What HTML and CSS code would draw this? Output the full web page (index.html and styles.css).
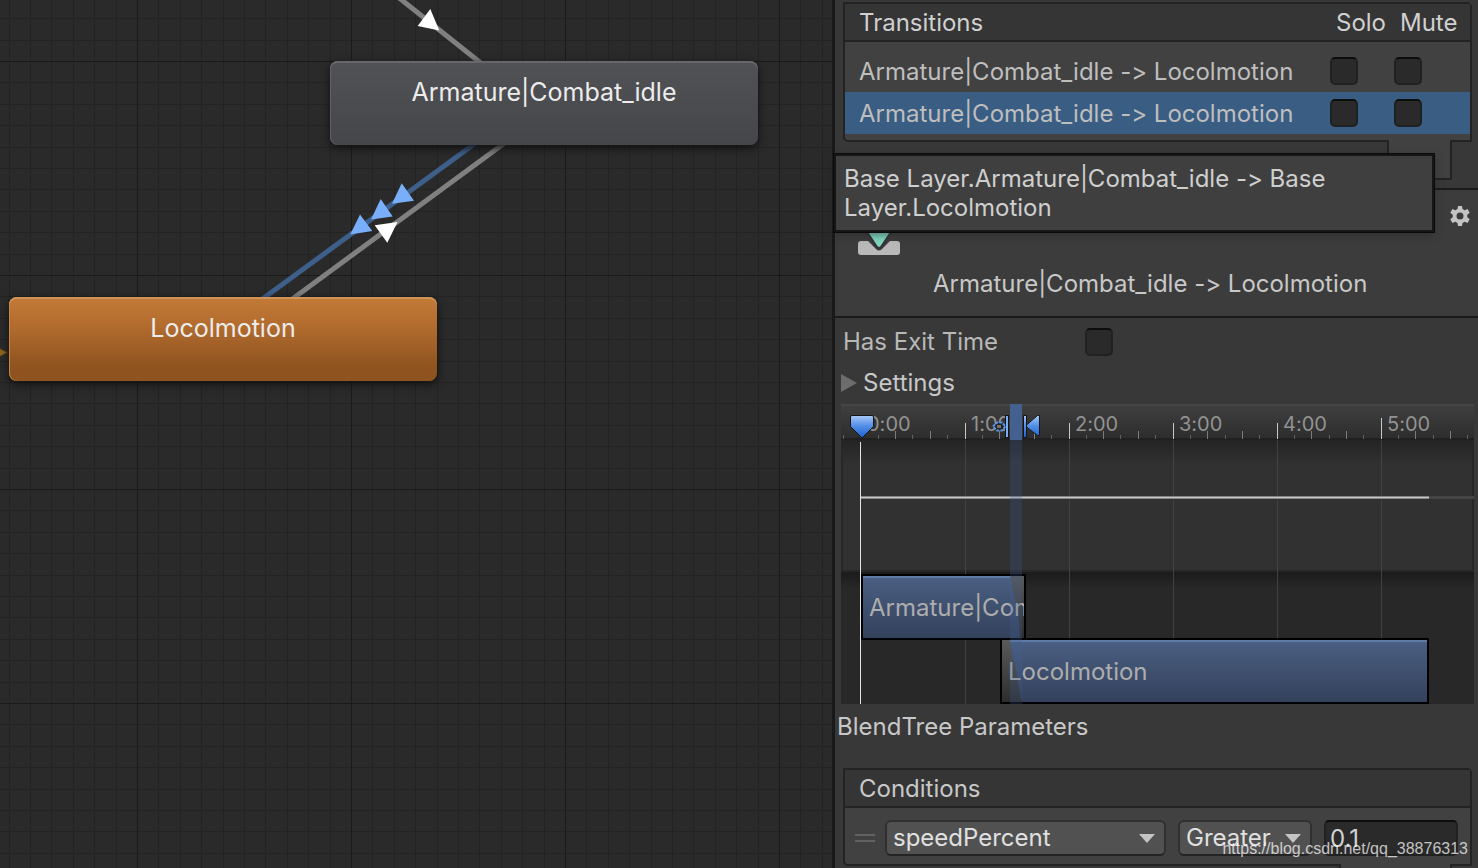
FILE: index.html
```
<!DOCTYPE html>
<html lang="en">
<head>
<meta charset="utf-8">
<title>Animator</title>
<link rel="stylesheet" href="styles.css">
</head>
<body>
<div class="editor">
  <main class="graph">
    <svg class="graph-art" aria-hidden="true">
      <defs>
        <pattern id="grid" x="137" y="61" width="214" height="214" patternUnits="userSpaceOnUse">
          <path class="grid-minor" d="M21.5 0V214M43.5 0V214M64.5 0V214M86.5 0V214M107.5 0V214M128.5 0V214M150.5 0V214M171.5 0V214M193.5 0V214M0 21.5H214M0 43.5H214M0 64.5H214M0 86.5H214M0 107.5H214M0 128.5H214M0 150.5H214M0 171.5H214M0 193.5H214"/>
          <path class="grid-major" d="M.5 0V214M0 .5H214"/>
        </pattern>
      </defs>
      <rect width="100%" height="100%" fill="url(#grid)"/>
      <path class="edge" d="M398 -3L482 64M506 142L291 300"/>
      <path class="edge edge-selected" d="M477 142L261 300"/>
      <path class="arrow" d="M430.3 9L417.7 26L439.3 30.5ZM374.7 225.3L397.5 222L387.3 242.7Z"/>
      <path class="arrow-selected" d="M401.7 183.2L414 200.8L392 203.8ZM380.7 199L392.7 216.5L371 219.5ZM360 214.5L372.3 231L350.3 234.5Z"/>
      <path class="arrow-entry" d="M-2 347.500L8 352.500L-2 357.500Z"/>
    </svg>
    <div class="node node-idle">Armature|Combat_idle</div>
    <div class="node node-default">Locolmotion</div>
  </main>

  <aside class="inspector">
    <div class="list">
      <table class="transitions">
        <thead>
          <tr><th>Transitions</th><th class="col-solo">Solo</th><th class="col-mute">Mute</th></tr>
        </thead>
        <tbody>
          <tr>
            <td>Armature|Combat_idle -&gt; Locolmotion</td>
            <td><input class="check" type="checkbox" aria-label="Solo transition 1"></td>
            <td><input class="check" type="checkbox" aria-label="Mute transition 1"></td>
          </tr>
          <tr class="selected">
            <td>Armature|Combat_idle -&gt; Locolmotion</td>
            <td><input class="check" type="checkbox" aria-label="Solo transition 2"></td>
            <td><input class="check" type="checkbox" aria-label="Mute transition 2"></td>
          </tr>
        </tbody>
      </table>
    </div>
    <div class="list-tab"></div>

    <header class="object-header">
      <svg class="transition-icon" width="42" height="42" viewBox="0 0 42 42" aria-hidden="true">
        <path fill="#b9b9b9" d="M3 28H10L18 36Q21 39 24 36L32 28H39Q42 28 42 31V39Q42 42 39 42H3Q0 42 0 39V31Q0 28 3 28Z"/>
        <path fill="#7fd6c1" stroke="#343434" stroke-width="2" d="M17 0H25V19H33L23 34Q21 36 19 34L9 19H17Z"/>
      </svg>
      <h1 class="object-title">Armature|Combat_idle -&gt; Locolmotion</h1>
      <button class="gear" aria-label="Options">
        <svg width="20" height="20" viewBox="0 0 20 20" aria-hidden="true">
          <path fill="#c4c4c4" fill-rule="evenodd" d="M8 0H12L12.5 3L14.7 4.2L17.6 3.1L19.7 6.7L17.3 8.7V11.3L19.7 13.3L17.6 16.9L14.7 15.8L12.5 17L12 20H8L7.5 17L5.3 15.8L2.4 16.9L.3 13.3L2.7 11.3V8.7L.3 6.7L2.4 3.1L5.3 4.2L7.5 3ZM10 6.500A3.500 3.500 0 1 0 10 13.500A3.500 3.500 0 1 0 10 6.500Z"/>
        </svg>
      </button>
    </header>

    <div class="property">
      <label for="exit">Has Exit Time</label>
      <input class="check" id="exit" type="checkbox">
    </div>
    <button class="foldout">
      <svg width="16" height="18" viewBox="0 0 16 18" aria-hidden="true"><path fill="#6d6d6d" d="M0 0L16 9L0 18Z"/></svg>
      Settings
    </button>

    <section class="timeline" aria-label="Transition timeline">
      <div class="ruler"><span>0:00</span><span>1:00</span><span>2:00</span><span>3:00</span><span>4:00</span><span>5:00</span></div>
      <div class="curve"></div>
      <div class="tracks">
        <div class="clip clip-source">
          <svg class="clip-fade" width="14" height="62" viewBox="0 0 14 62" aria-hidden="true"><path d="M0 0H14V62H10L9 46Z" fill="url(#fade)"/></svg>
          <span>Armature|Com</span>
        </div>
        <div class="clip clip-target">
          <svg class="clip-fade" width="20" height="62" viewBox="0 0 20 62" aria-hidden="true"><path d="M0 0H8L12 20L20 62H0Z" fill="url(#fade)"/></svg>
          <span>Locolmotion</span>
        </div>
      </div>
      <svg class="timeline-art" aria-hidden="true">
        <defs>
          <linearGradient id="fade" x1="0" y1="0" x2="0" y2="1"><stop offset="0" stop-color="#5a5a5a"/><stop offset="1" stop-color="#2d2d2d"/></linearGradient>
          <linearGradient id="marker" x1="0" y1="0" x2="0" y2="1"><stop offset="0" stop-color="#a9c9f8"/><stop offset=".45" stop-color="#5590e8"/><stop offset="1" stop-color="#1c5fd0"/></linearGradient>
        </defs>
        <path class="tick-small" d="M2.5 31V35M37.5 31V35M71.5 31V35M106.5 31V35M141.5 31V35M175.5 31V35M210.5 31V35M245.5 31V35M279.5 31V35M314.5 31V35M349.5 31V35M384.5 31V35M418.5 31V35M453.5 31V35M488.5 31V35M522.5 31V35M557.5 31V35M592.5 31V35M626.5 31V35"/>
        <path class="tick-medium" d="M54.5 27V35M89.5 27V35M158.5 27V35M193.5 27V35M262.5 27V35M297.5 27V35M366.5 27V35M401.5 27V35M470.5 27V35M505.5 27V35M574.5 27V35M609.5 27V35"/>
        <path class="tick-large" d="M124.5 19V35M228.5 19V35M332.5 19V35M436.5 19V35M540.5 14V35"/>
        <path class="second-line" d="M124.5 36V170M124.5 236V300M228.5 36V234M332.5 36V234M436.5 36V234M540.5 36V234"/>
        <rect class="curve-rest" x="588" y="92" width="100%" height="3"/>
        <rect class="curve-line" x="20" y="92" width="568" height="3"/>
        <rect class="curve-core" x="20" y="93" width="568" height="1"/>
        <rect class="band" x="169" y="36" width="12" height="264"/>
        <rect class="band-top" x="169" y="0" width="12" height="36"/>
        <rect class="playhead" x="19" y="38" width="1" height="262"/>
        <path fill="url(#marker)" stroke="#151515" d="M9.5 13Q9.5 11.500 11 11.500H31Q32.5 11.500 32.5 13V22.500L21 34L9.500 22.500Z"/>
        <path fill="url(#marker)" stroke="#151515" d="M182.5 11.500H185.500V21L196.500 11.500H198.500V31.500H196.500L185.500 23V33.500H182.500Z"/>
        <path fill="none" stroke="#151515" d="M185.500 11.500V33.500"/>
        <rect x="164.500" y="11.500" width="3" height="22" fill="#78aef5" stroke="#151515"/>
        <path fill="#202020" stroke="#5c93e2" stroke-width="2" stroke-dasharray="3 1" d="M152 22.500L156 18.500H161L164.500 22.500L161 26.500H156Z"/>
        <rect x="156" y="21" width="4" height="3" fill="#77746c"/>
      </svg>
    </section>

    <h2 class="section-title">BlendTree Parameters</h2>

    <section class="list conditions">
      <h2 class="list-title">Conditions</h2>
      <div class="condition">
        <span class="grip"></span>
        <div class="dropdown dropdown-parameter">
          <select aria-label="Parameter"><option>speedPercent</option></select>
          <svg width="16" height="9" viewBox="0 0 16 9" aria-hidden="true"><path fill="#c4c4c4" d="M0 0H16L8 9Z"/></svg>
        </div>
        <div class="dropdown">
          <select aria-label="Comparison"><option>Greater</option></select>
          <svg width="16" height="9" viewBox="0 0 16 9" aria-hidden="true"><path fill="#c4c4c4" d="M0 0H16L8 9Z"/></svg>
        </div>
        <input class="threshold" type="text" value="0.1" aria-label="Threshold">
      </div>
    </section>
    <div class="list-tab list-tab-wide"></div>

    <div class="tooltip" role="tooltip">Base Layer.Armature|Combat_idle -&gt; Base Layer.Locolmotion</div>
  </aside>
  <div class="watermark">https://blog.csdn.net/qq_38876313</div>
</div>
</body>
</html>
```
FILE: styles.css
```
* {
  box-sizing: border-box;
}

body {
  margin: 0;
  background: #383838;
  color: #c8c8c8;
  font: 24px/30px Inter, "Liberation Sans", sans-serif;
  font-variant-ligatures: none;
  font-feature-settings: "calt" 0;
}

h1, h2 {
  margin: 0;
  font-size: 24px;
  font-weight: 400;
}

button, input, select {
  font: inherit;
  color: inherit;
}

.editor {
  position: relative;
  display: grid;
  grid-template-columns: minmax(0, 1fr) 646px;
  height: 100vh;
  overflow: hidden;
}

/* State graph */

.graph {
  position: relative;
  overflow: hidden;
  background: #2a2a2a;
}

.graph-art {
  display: block;
  width: 100%;
  height: 100%;
}

.grid-minor {
  stroke: #232323;
}

.grid-major {
  stroke: #1a1a1a;
}

.edge {
  fill: none;
  stroke: #808080;
  stroke-width: 5px;
}

.edge-selected {
  stroke: #3e5f8a;
}

.arrow {
  fill: #fff;
}

.arrow-selected {
  fill: #78aefa;
}

.arrow-entry {
  fill: #8a6420;
  stroke: #4a3410;
}

.node {
  position: absolute;
  width: 428px;
  height: 84px;
  padding-top: 16px;
  border-radius: 8px;
  color: #ececec;
  font-size: 25px;
  text-align: center;
}

.node-idle {
  left: 330px;
  top: 61px;
  background: linear-gradient(#505256, #45464a);
  box-shadow: inset 0 2px #65676a, inset 1px 0 #606265, 0 3px 8px #111;
}

.node-default {
  left: 9px;
  top: 297px;
  background: linear-gradient(#c27a37, #b87031 25%, #8e531f 85%);
  box-shadow: inset 0 2px #d09458, inset 1px 0 #c58748, 0 3px 8px #111;
}

/* Inspector */

.inspector {
  position: relative;
  min-width: 0;
  border-left: 3px solid #191919;
  background: #383838;
}

.list {
  margin: 2px 6px 0 8px;
  padding-bottom: 6px;
  border: 2px solid #232323;
  border-radius: 0 5px 0 5px;
  background: #414141;
}

.transitions {
  width: 100%;
  border-spacing: 0;
  table-layout: fixed;
}

.transitions th {
  height: 38px;
  padding: 2px 0 0 14px;
  border-bottom: 2px solid #232323;
  background: #353535;
  color: #d0d0d0;
  font-weight: 400;
  text-align: left;
}

.transitions .col-solo {
  width: 64px;
  padding-left: 6px;
}

.transitions .col-mute {
  width: 76px;
  padding-left: 6px;
}

.transitions td {
  height: 42px;
  padding: 0;
  color: #bebebe;
}

.transitions td:first-child {
  padding: 2px 0 0 14px;
}

.transitions tbody tr:first-child td {
  height: 50px;
  padding-top: 8px;
}

.transitions tbody tr:first-child td:first-child {
  padding-top: 10px;
}

.selected {
  background: #395d83;
}

.check {
  display: block;
  appearance: none;
  width: 28px;
  height: 28px;
  margin: 0;
  border: 2px solid #212121;
  border-top-color: #0d0d0d;
  border-radius: 5px;
  background: #2a2a2a;
}

.list-tab {
  position: relative;
  width: 65px;
  height: 40px;
  margin: -2px 26px 8px auto;
  border: 2px solid #232323;
  border-top: 0;
  background: #414141;
}

.object-header {
  display: grid;
  grid-template-columns: 75px 1fr 20px;
  align-items: start;
  height: 130px;
  padding: 16px 8px 0 23px;
  border-top: 2px solid #1a1a1a;
  border-bottom: 2px solid #1a1a1a;
  background: #3c3c3c;
}

.transition-icon {
  margin-top: 7px;
}

.object-title {
  padding-top: 63px;
  white-space: nowrap;
}

.gear {
  display: block;
  height: 20px;
  padding: 0;
  border: 0;
  background: none;
}

.gear svg {
  display: block;
}

.property {
  display: grid;
  grid-template-columns: 242px 28px;
  align-items: center;
  height: 48px;
  padding-left: 8px;
  color: #b8b8b8;
}

.foldout {
  display: flex;
  align-items: center;
  gap: 6px;
  height: 30px;
  margin: 2px 0 6px 6px;
  padding: 0;
  border: 0;
  background: none;
}

/* Timeline */

.timeline {
  position: relative;
  margin: 0 4px 0 6px;
  overflow: hidden;
}

.ruler {
  display: flex;
  height: 36px;
  padding: 3px 0 0 26px;
  border-top: 2px solid #454545;
  border-bottom: 2px solid #202020;
  background: linear-gradient(#3f3f3f, #2d2d2d);
  color: #929292;
  font-size: 20px;
}

.ruler span {
  flex: 0 0 104px;
}

.curve {
  height: 132px;
  border: solid #272727;
  border-width: 0 2px 2px;
  background: linear-gradient(#242424, #313131 24px);
}

.tracks {
  height: 132px;
  padding: 2px 0 0 20px;
  background: linear-gradient(#1b1b1b, #282828 16px);
}

.clip {
  position: relative;
  height: 66px;
  padding: 17px 0 0 6px;
  overflow: hidden;
  border: 2px solid #000;
  background: linear-gradient(#5f7ca8, #5f7ca8 2px, #4a5f82 2px, #33415b);
  color: #adadad;
  white-space: nowrap;
}

.clip span {
  position: relative;
}

.clip-source {
  width: 165px;
}

.clip-target {
  width: 429px;
  margin: -2px 0 0 139px;
}

.clip-fade {
  position: absolute;
  top: 0;
}

.clip-source .clip-fade {
  right: 0;
}

.clip-target .clip-fade {
  left: 0;
}

.timeline-art {
  position: absolute;
  inset: 0;
  width: 100%;
  height: 100%;
}

.tick-small {
  stroke: #606060;
}

.tick-medium {
  stroke: #7c7c7c;
}

.tick-large {
  stroke: #c8c8c8;
}

.second-line {
  stroke: #414141;
}

.curve-line {
  fill: #848484;
}

.curve-core {
  fill: #c8c8c8;
}

.curve-rest {
  fill: #454545;
}

.band {
  fill: #436094;
  fill-opacity: .25;
}

.band-top {
  fill: #43608f;
}

.playhead {
  fill: #e4e4e4;
}

.section-title {
  padding: 8px 0 0 2px;
}

/* Conditions */

.conditions {
  margin-top: 26px;
  padding-bottom: 8px;
}

.list-title {
  height: 38px;
  padding: 4px 14px 0;
  border-bottom: 2px solid #232323;
  background: #353535;
}

.condition {
  display: grid;
  grid-template-columns: 20px minmax(0, 1fr) 134px 134px;
  column-gap: 12px;
  align-items: center;
  padding: 12px 12px 0 10px;
}

.grip {
  height: 8px;
  border: solid #626262;
  border-width: 2px 0;
}

.dropdown {
  position: relative;
  color: #e0e0e0;
}

.dropdown select {
  display: block;
  appearance: none;
  width: 100%;
  height: 36px;
  padding: 0 6px;
  border: 2px solid #303030;
  border-bottom-color: #242424;
  border-radius: 6px;
  background: #515151;
}

.dropdown svg {
  position: absolute;
  right: 11px;
  top: 14px;
}

.dropdown-parameter {
  margin-left: -2px;
}

.threshold {
  width: 100%;
  height: 36px;
  padding: 0 4px;
  border: 2px solid #212121;
  border-top-color: #0d0d0d;
  border-radius: 5px;
  background: #2a2a2a;
  color: #d2d2d2;
}

.list-tab-wide {
  width: 113px;
}

.tooltip {
  position: absolute;
  top: 154px;
  left: -1px;
  width: 600px;
  padding: 8px 60px 8px 8px;
  border: 2px solid #161616;
  background: #3f3f3f;
  box-shadow: 0 0 0 1px #0a0a0a, 0 3px 8px #2228;
  color: #cfcfcf;
  line-height: 29px;
}

.watermark {
  position: absolute;
  right: 10px;
  bottom: 9px;
  color: #ffffffb8;
  font: 16px/20px "Liberation Sans", sans-serif;
}
```
